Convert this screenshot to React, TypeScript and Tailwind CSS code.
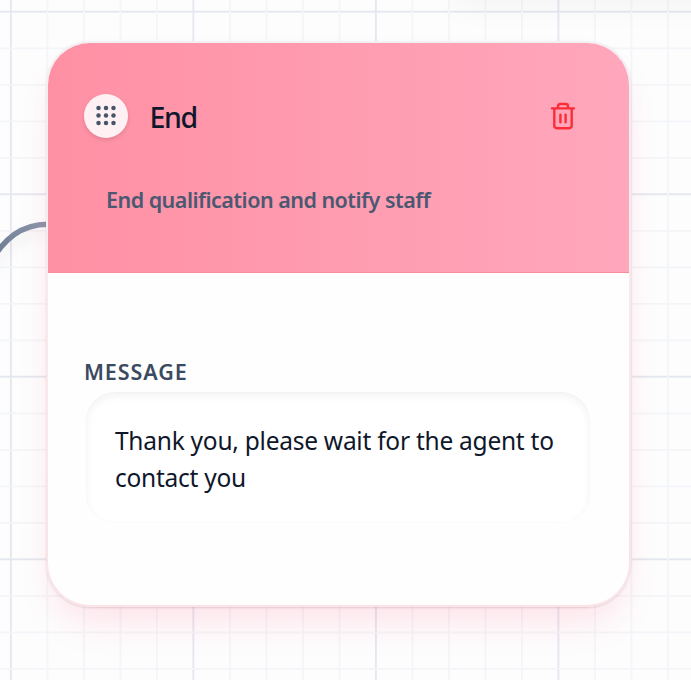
import React from "react";

const GRID = 36.5;
const minor = Array.from({ length: 20 }, (_, i) => i);

function CanvasGrid() {
  return (
    <svg className="absolute inset-0" width="691" height="680" fill="none">
      {minor.map((i) => {
        const major = i % 5 === 0;
        const stroke = major ? "#e5e8ef" : "#f4f5f8";
        return (
          <g key={i} stroke={stroke} strokeWidth={major ? 1.9 : 1.8}>
            <path d={`M${10.9 + i * GRID} 0V680`} />
            <path d={`M0 ${11.8 + i * GRID}H691`} />
          </g>
        );
      })}
    </svg>
  );
}

function Connector() {
  return (
    <svg className="absolute inset-0" width="46" height="300" fill="none">
      <defs>
        <linearGradient id="edge" gradientUnits="userSpaceOnUse" x1="0" y1="250" x2="46" y2="224">
          <stop stopColor="#718096" />
          <stop offset="1" stopColor="#8c96aa" />
        </linearGradient>
      </defs>
      <path
        d="M-12 266C4 238 22 224.2 48 224.2"
        stroke="url(#edge)"
        strokeWidth="5.5"
        className="drop-shadow-[0_7px_7px_rgba(0,0,0,0.07)]"
      />
    </svg>
  );
}

function GripIcon() {
  const dots = [-7.5, 0, 7.5];
  return (
    <svg width="22" height="22" viewBox="-11 -10.5 22 22" fill="#475569">
      {dots.map((y) => dots.map((x) => <circle key={`${x}${y}`} cx={x} cy={y} r="2.25" />))}
    </svg>
  );
}

function TrashIcon() {
  return (
    <svg
      width="30"
      height="30"
      viewBox="0 0 30 30"
      fill="none"
      stroke="#fb2c36"
      strokeWidth="2.4"
      strokeLinecap="round"
      strokeLinejoin="round"
    >
      <path d="M4.1 7.4h21.8M6.3 7.4v17.2a2.6 2.6 0 0 0 2.6 2.6h12.2a2.6 2.6 0 0 0 2.6-2.6V7.4M10 7.2V5.2a2.2 2.2 0 0 1 2.2-2.2h5.6a2.2 2.2 0 0 1 2.2 2.2v2M12.4 13.6v7.6M17.6 13.6v7.6" />
    </svg>
  );
}

export default function App() {
  return (
    <main className="relative h-[680px] w-[691px] overflow-hidden bg-[#fdfdfe] font-['Noto_Sans','Open_Sans',sans-serif]">
      <CanvasGrid />
      <div className="absolute top-[-30px] left-[460px] h-[28px] w-[280px] shadow-[0_2px_32px_6px_rgba(0,0,0,0.045)]" />
      <Connector />
      <section className="relative mt-[41px] ml-[46px] h-[565.5px] w-[584.5px] rounded-[44px] bg-gradient-to-b from-[#f1f0f2] via-[#fbe9ec] to-[#fbe3e8] p-[2px] shadow-[0_24px_40px_-12px_rgba(255,32,86,0.12),0_8px_30px_rgba(255,32,86,0.02),0_1px_2px_rgba(0,0,0,0.12)]">
        <div className="flex h-full flex-col overflow-hidden rounded-[42px] bg-[#fefefe]">
          <header className="h-[230px] border-b border-[#fb8c9f] bg-gradient-to-r from-[#ff90a4] to-[#ffa7bc] px-9 pt-[51px]">
            <div className="flex h-11 items-center">
              <span className="flex size-11 items-center justify-center rounded-full bg-[#fff0f3] shadow-[0_2px_4px_rgba(0,0,0,0.12)]">
                <GripIcon />
              </span>
              <h1 className="mt-px ml-[21.5px] text-[28.5px] leading-9 font-medium tracking-[-1.4px] text-[#0f172b]">
                End
              </h1>
              <button className="mr-[14.5px] ml-auto" aria-label="Delete">
                <TrashIcon />
              </button>
            </div>
            <p className="mt-[47px] ml-[22px] text-[21.5px] leading-[30px] font-semibold tracking-[-0.52px] whitespace-nowrap text-[#4b5872]">
              End qualification and notify staff
            </p>
          </header>
          <div className="px-9 pt-[84px]">
            <h2 className="text-[21.5px] leading-[30px] font-semibold tracking-[0.9px] text-[#3a4a60]">MESSAGE</h2>
            <div className="mt-[5px] ml-[2px] h-[131px] w-[504px] rounded-[29px] bg-white px-[29px] pt-[30px] text-[24.5px] leading-[37px] tracking-[-0.25px] whitespace-nowrap text-[#0f172b] shadow-[inset_0_4px_8px_rgba(0,0,0,0.05),inset_0_0_0_1px_rgba(0,0,0,0.01)]">
              Thank you, please wait for the agent to
              <br />
              contact you
            </div>
          </div>
        </div>
      </section>
    </main>
  );
}
